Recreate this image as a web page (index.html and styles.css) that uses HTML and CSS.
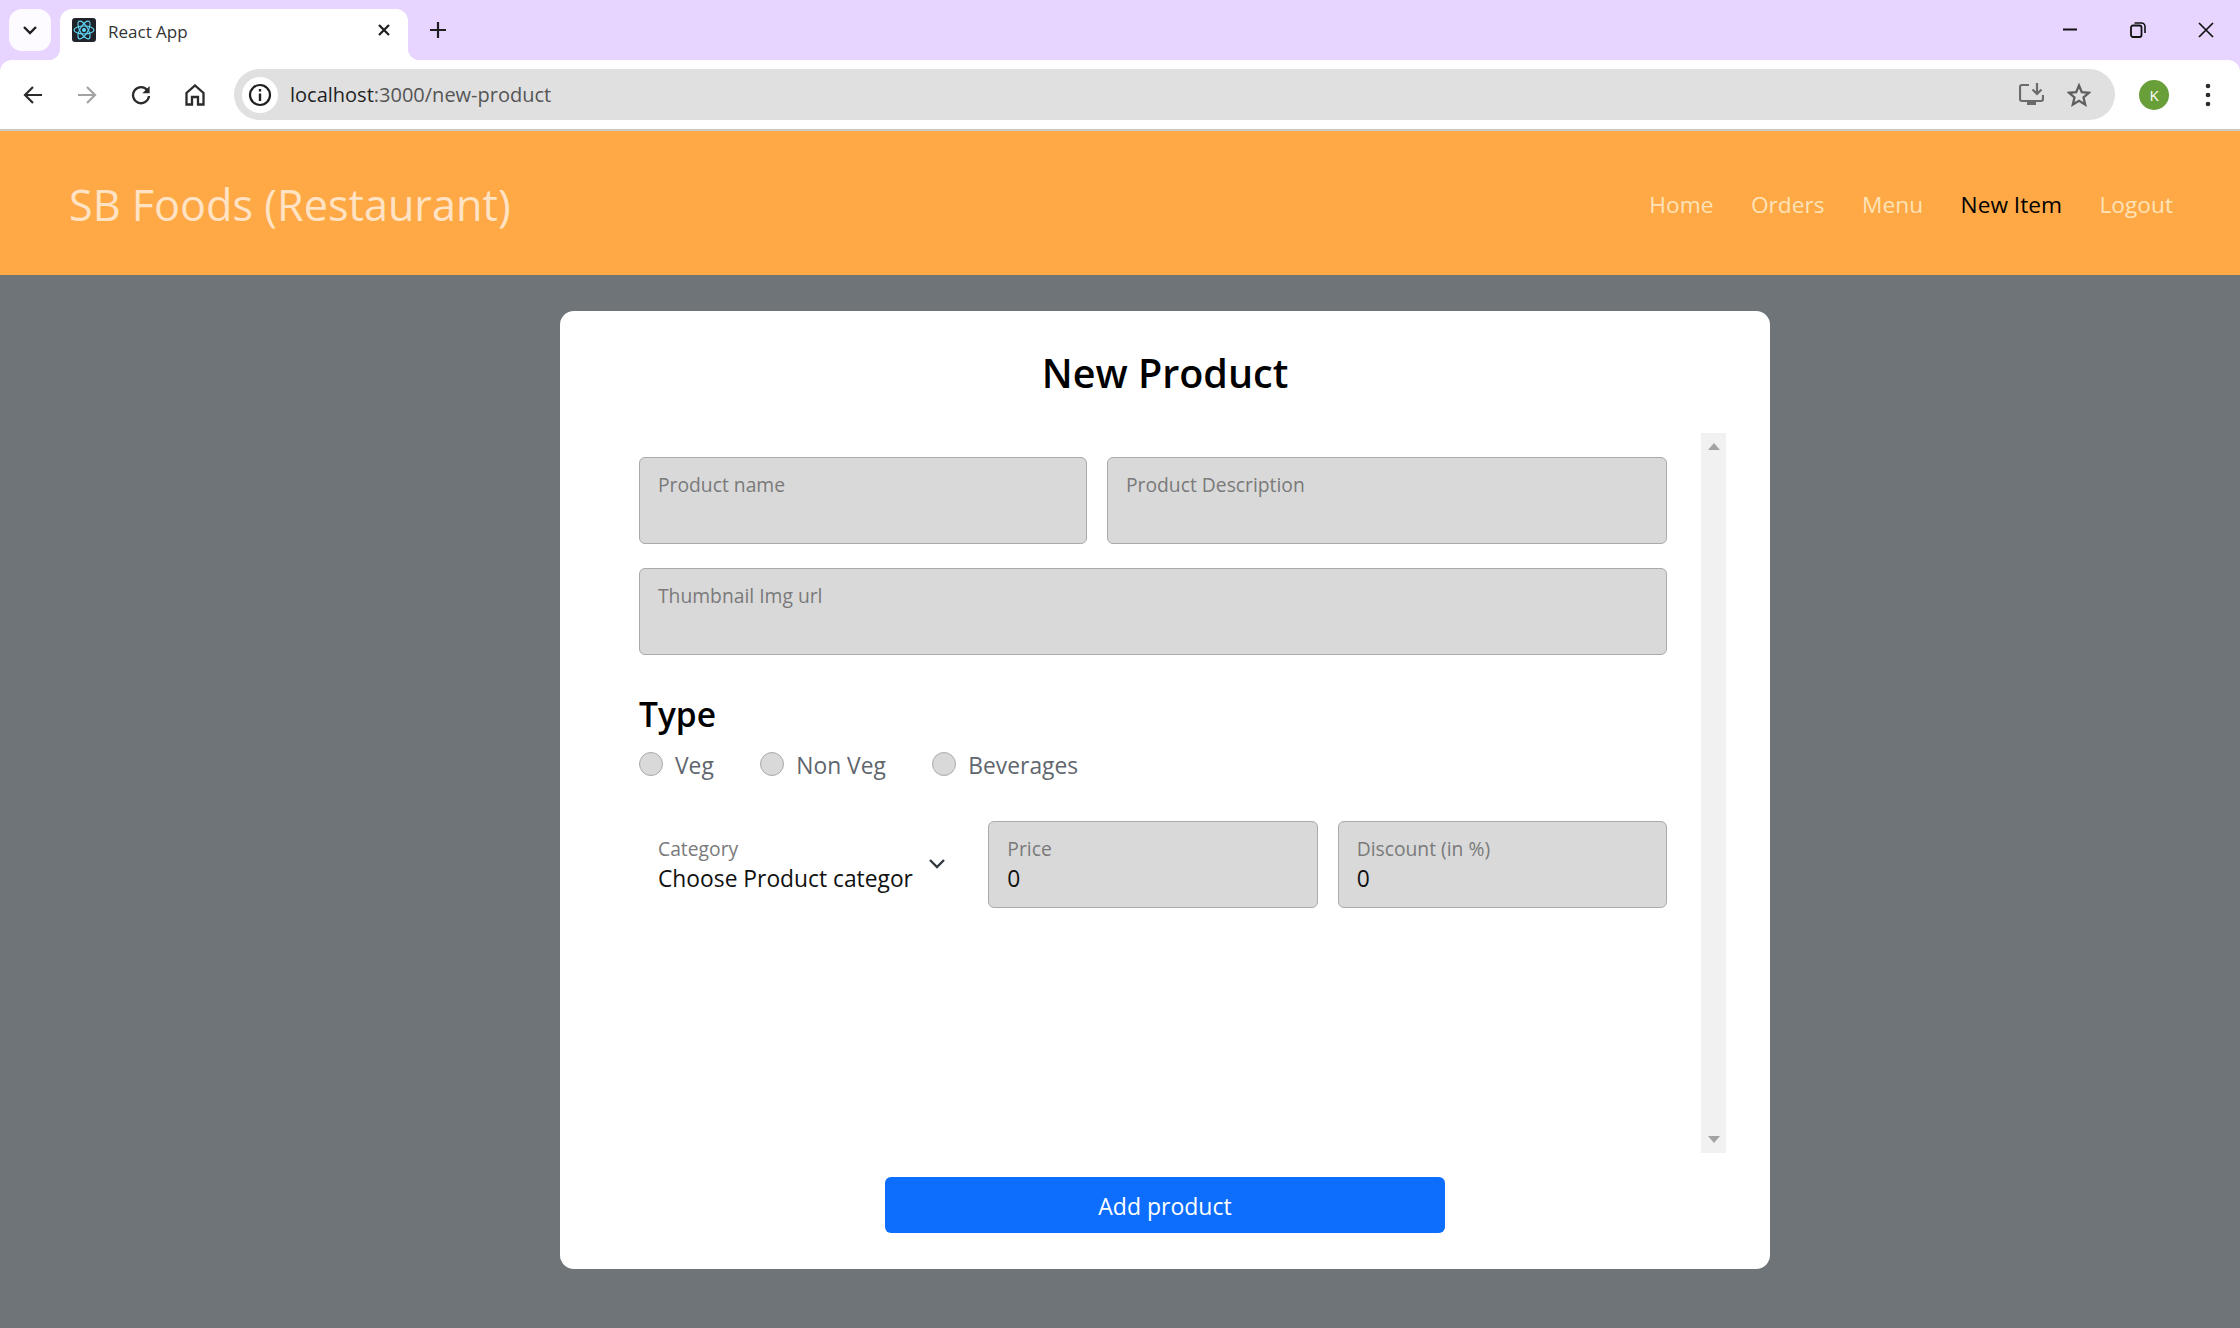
FILE: index.html
```html
<!DOCTYPE html>
<html lang="en">
<head>
<meta charset="utf-8">
<title>React App</title>
<link rel="stylesheet" href="styles.css">
</head>
<body>
<header class="chrome">
  <div class="tabstrip">
    <div class="tab-chip">
      <svg width="16" height="10" viewBox="0 0 16 10"><path d="M2 2l6 6 6-6" fill="none" stroke="#1f1f1f" stroke-width="2.4"/></svg>
    </div>
    <div class="tab">
      <svg class="favicon" width="24" height="24" viewBox="0 0 24 24"><rect width="24" height="24" rx="3" fill="#20232a"/><g fill="none" stroke="#61dafb" stroke-width="1.1"><ellipse cx="12" cy="12" rx="10" ry="4"/><ellipse cx="12" cy="12" rx="10" ry="4" transform="rotate(60 12 12)"/><ellipse cx="12" cy="12" rx="10" ry="4" transform="rotate(120 12 12)"/></g><circle cx="12" cy="12" r="2" fill="#61dafb"/></svg>
      <span class="tab-title">React App</span>
      <svg class="tab-close" width="14" height="14" viewBox="0 0 14 14"><path d="M2 2l10 10M12 2L2 12" stroke="#1f1f1f" stroke-width="2.2"/></svg>
    </div>
    <svg class="new-tab" width="16" height="16" viewBox="0 0 16 16"><path d="M8 0v16M0 8h16" stroke="#1f1f1f" stroke-width="2.2"/></svg>
    <div class="window-controls">
      <svg width="16" height="16" viewBox="0 0 16 16"><path d="M1 7.5h14" stroke="#111" stroke-width="2"/></svg>
      <svg width="16" height="16" viewBox="0 0 16 16"><rect x="1" y="3.500" width="10.500" height="11.500" rx="2" fill="none" stroke="#111" stroke-width="1.800"/><path d="M4.500 1h7a3.500 3.500 0 0 1 3.500 3.500V11" fill="none" stroke="#111" stroke-width="1.600"/></svg>
      <svg width="16" height="16" viewBox="0 0 16 16"><path d="M1 1l14 14M15 1L1 15" stroke="#111" stroke-width="1.7"/></svg>
    </div>
  </div>
  <div class="toolbar">
    <div class="tool-btn"><svg width="20" height="20" viewBox="0 0 20 20"><path d="M19 10H2.5M10 2l-8 8 8 8" fill="none" stroke="#2b2b2b" stroke-width="2.2"/></svg></div>
    <div class="tool-btn"><svg width="20" height="20" viewBox="0 0 20 20"><path d="M1 10h16.5M10 2l8 8-8 8" fill="none" stroke="#a3a3a3" stroke-width="2.2"/></svg></div>
    <div class="tool-btn"><svg width="20" height="20" viewBox="0 0 20 20"><path d="M16.5 5.5A8 8 0 1 0 18 11" fill="none" stroke="#2b2b2b" stroke-width="2.3"/><path d="M18.6 1v7.2h-7.2z" fill="#2b2b2b"/></svg></div>
    <div class="tool-btn"><svg width="20" height="22" viewBox="0 0 20 22"><path d="M1.5 20.5V9L10 1.5 18.500 9v11.500h-5.500V13H7v7.500z" fill="none" stroke="#2b2b2b" stroke-width="2.300"/></svg></div>
    <div class="address">
      <div class="site-info"><svg width="24" height="24" viewBox="0 0 24 24"><circle cx="12" cy="12" r="10" fill="none" stroke="#1f1f1f" stroke-width="2.2"/><path d="M12 10.500V18M12 6v2.500" stroke="#1f1f1f" stroke-width="2.400"/></svg></div>
      <span class="url"><span class="url-host">localhost</span>:3000/new-product</span>
      <div class="address-actions">
        <svg width="25" height="23" viewBox="0 0 25 23"><path d="M10 2H3a2 2 0 0 0-2 2v12a2 2 0 0 0 2 2h19a2 2 0 0 0 2-2v-4" fill="none" stroke="#6b6b6b" stroke-width="2.200"/><path d="M8 18h9v4H8z" fill="#6b6b6b"/><path d="M18 0v10M13.500 6.500L18 11l4.500-4.500" fill="none" stroke="#6b6b6b" stroke-width="2.200"/></svg>
        <svg width="24" height="24" viewBox="0 0 24 24"><path d="M12 2.500l2.800 6.700 7.200.6-5.500 4.700 1.700 7-6.200-3.700-6.200 3.700 1.700-7L2 9.800l7.200-.6z" fill="none" stroke="#5f5f5f" stroke-width="2.300"/></svg>
      </div>
    </div>
    <div class="avatar">K</div>
    <svg class="kebab" width="6" height="24" viewBox="0 0 6 24"><circle cx="3" cy="3" r="2.300" fill="#2b2b2b"/><circle cx="3" cy="12" r="2.300" fill="#2b2b2b"/><circle cx="3" cy="21" r="2.300" fill="#2b2b2b"/></svg>
  </div>
</header>

<nav class="navbar">
  <div class="brand">SB Foods (Restaurant)</div>
  <ul class="nav-links">
    <li class="nav-link">Home</li>
    <li class="nav-link">Orders</li>
    <li class="nav-link">Menu</li>
    <li class="nav-link nav-link-active">New Item</li>
    <li class="nav-link">Logout</li>
  </ul>
</nav>

<main class="page">
  <section class="card">
    <h1 class="card-title">New Product</h1>
    <div class="scroll-area">
      <form class="form">
        <div class="row row-two">
          <div class="field"><label class="field-label">Product name</label></div>
          <div class="field"><label class="field-label">Product Description</label></div>
        </div>
        <div class="row">
          <div class="field"><label class="field-label">Thumbnail Img url</label></div>
        </div>
        <h3 class="type-title">Type</h3>
        <div class="radios">
          <label class="radio-option"><input class="radio" type="radio" name="type"><span>Veg</span></label>
          <label class="radio-option"><input class="radio" type="radio" name="type"><span>Non Veg</span></label>
          <label class="radio-option"><input class="radio" type="radio" name="type"><span>Beverages</span></label>
        </div>
        <div class="row row-three">
          <div class="field field-select">
            <label class="field-label">Category</label>
            <div class="field-value">Choose Product categor</div>
            <svg class="chevron" width="18" height="12" viewBox="0 0 18 12"><path d="M2 2l7 7 7-7" fill="none" stroke="#343a40" stroke-width="2.400"/></svg>
          </div>
          <div class="field"><label class="field-label">Price</label><div class="field-value">0</div></div>
          <div class="field"><label class="field-label">Discount (in %)</label><div class="field-value">0</div></div>
        </div>
      </form>
      <div class="scrollbar">
        <svg width="12" height="7" viewBox="0 0 12 7"><path d="M6 0l6 7H0z" fill="#a3a3a3"/></svg>
        <svg width="12" height="7" viewBox="0 0 12 7"><path d="M0 0h12L6 7z" fill="#a3a3a3"/></svg>
      </div>
    </div>
    <button class="submit" type="button">Add product</button>
  </section>
</main>
</body>
</html>
```
FILE: styles.css
```css
* { box-sizing: border-box; }
html, body { margin: 0; height: 100%; }
body {
  display: flex;
  flex-direction: column;
  overflow: hidden;
  background: #6f7478;
  font-family: "Open Sans", "Noto Sans", sans-serif;
  color: #000;
}

/* browser chrome */
.chrome { background: #e8d5ff; flex: none; }
.tabstrip { display: flex; height: 60px; padding: 9px 26px 0 9px; align-items: flex-start; }
.tab-chip {
  width: 42px; height: 42px; border-radius: 13px; background: #fdfbff;
  display: flex; align-items: center; justify-content: center;
  flex: none;
}
.tab {
  position: relative;
  width: 348px; height: 51px; margin-left: 9px;
  background: #fff; border-radius: 12px 12px 0 0;
  display: flex; align-items: flex-start; padding: 9px 17px 0 12px;
  flex: none;
}
.tab::before, .tab::after {
  content: ""; position: absolute; bottom: 0; width: 12px; height: 12px;
}
.tab::before { left: -12px; background: radial-gradient(circle at 0 0, transparent 12px, #fff 12.5px); }
.tab::after { right: -12px; background: radial-gradient(circle at 100% 0, transparent 12px, #fff 12.5px); }
.favicon { flex: none; }
.tab-title { margin-left: 12px; font-size: 17px; line-height: 28px; color: #333; flex: 1; white-space: nowrap; }
.tab-close { margin-top: 5px; }
.new-tab { margin: 13px 0 0 22px; flex: none; }
.window-controls { margin-left: auto; display: flex; gap: 52px; padding-top: 13px; }

.toolbar {
  height: 71px; background: #fff; border-bottom: 2px solid #c9c9c9;
  border-radius: 12px 12px 0 0;
  display: flex; align-items: center; padding: 0 0 0 6px;
}
.tool-btn { width: 54px; height: 40px; display: flex; align-items: center; justify-content: center; flex: none; }
.address {
  width: 1881px; height: 51px; margin-left: 12px; border-radius: 26px;
  background: #e0e0e0; display: flex; align-items: center; padding: 0 24px 0 8px;
  flex: none;
}
.site-info {
  width: 36px; height: 36px; border-radius: 50%; background: #fff;
  display: flex; align-items: center; justify-content: center; flex: none;
}
.url { margin: 0 0 1px 12px; font-size: 20px; color: #555; white-space: nowrap; }
.url-host { color: #1f1f1f; }
.address-actions { margin-left: auto; display: flex; align-items: center; gap: 23px; }
.avatar {
  width: 30px; height: 30px; border-radius: 50%; margin-left: 24px;
  background: #689f38; color: #fff; font-size: 15px;
  display: flex; align-items: center; justify-content: center; flex: none;
}
.kebab { margin-left: 36px; flex: none; }

/* app navbar */
.navbar {
  flex: none; height: 144px; background: #fea946;
  display: flex; align-items: center; justify-content: space-between;
  padding: 0 67px 0 69px;
}
.brand { font-size: 43.200px; color: #ffe3c4; white-space: nowrap; padding-top: 2px; }
.nav-links { list-style: none; margin: 0; padding: 2px 0 0; display: flex; gap: 37.500px; }
.nav-link { font-size: 22.700px; color: #ffe3b8; white-space: nowrap; }
.nav-link-active { color: #000; }

/* page */
.page { flex: 1; padding: 36px 470px 59px 560px; min-height: 0; }
.card {
  height: 958px; background: #fff; border-radius: 14px;
  display: flex; flex-direction: column; padding-top: 32px;
}
.card-title { margin: 0 0 30px; font-size: 39.500px; line-height: 60px; font-weight: 600; text-align: center; }
.scroll-area { height: 720px; display: flex; padding-left: 79px; }
.form { width: 1028px; padding-top: 24px; flex: none; }
.row { display: grid; grid-template-columns: 1fr; gap: 20px; margin-bottom: 24px; }
.row-two { grid-template-columns: 448px 560px; }
.row-three { grid-template-columns: 1fr 1fr 1fr; margin-top: 41px; }
.field {
  position: relative;
  height: 87px; background: #d9d9d9; border: 1.500px solid #aaa; border-radius: 6px;
  padding: 13px 18px 0;
}
.field-label { display: block; font-size: 19.300px; line-height: 28px; color: #7a7a7a; white-space: nowrap; }
.field-value { font-size: 22.800px; line-height: 32px; color: #111; white-space: nowrap; }
.field-select { background: #fff; border-color: #fff; }
.chevron { position: absolute; left: 288px; top: 36px; }
.type-title { margin: 35px 0 14px; font-size: 33.500px; line-height: 48px; font-weight: 600; }
.radios { display: flex; gap: 46.500px; height: 28px; }
.radio-option { display: flex; align-items: flex-start; gap: 12px; font-size: 22.800px; line-height: 28px; color: #5f666d; }
.radio {
  appearance: none; margin: 0; width: 24px; height: 24px; border-radius: 50%;
  background: #d9d9d9; border: 1.500px solid #aaa;
}
.scrollbar {
  width: 25px; margin-left: 34px; background: #f1f1f1; flex: none;
  display: flex; flex-direction: column; align-items: center; justify-content: space-between;
  padding: 10px 0;
}
.submit {
  align-self: center; width: 560px; height: 56px; margin: 24px 0 0; padding-top: 3px;
  background: #0d6efd; color: #fff; border: 0; border-radius: 6px;
  font-family: inherit; font-size: 23px;
}
```
